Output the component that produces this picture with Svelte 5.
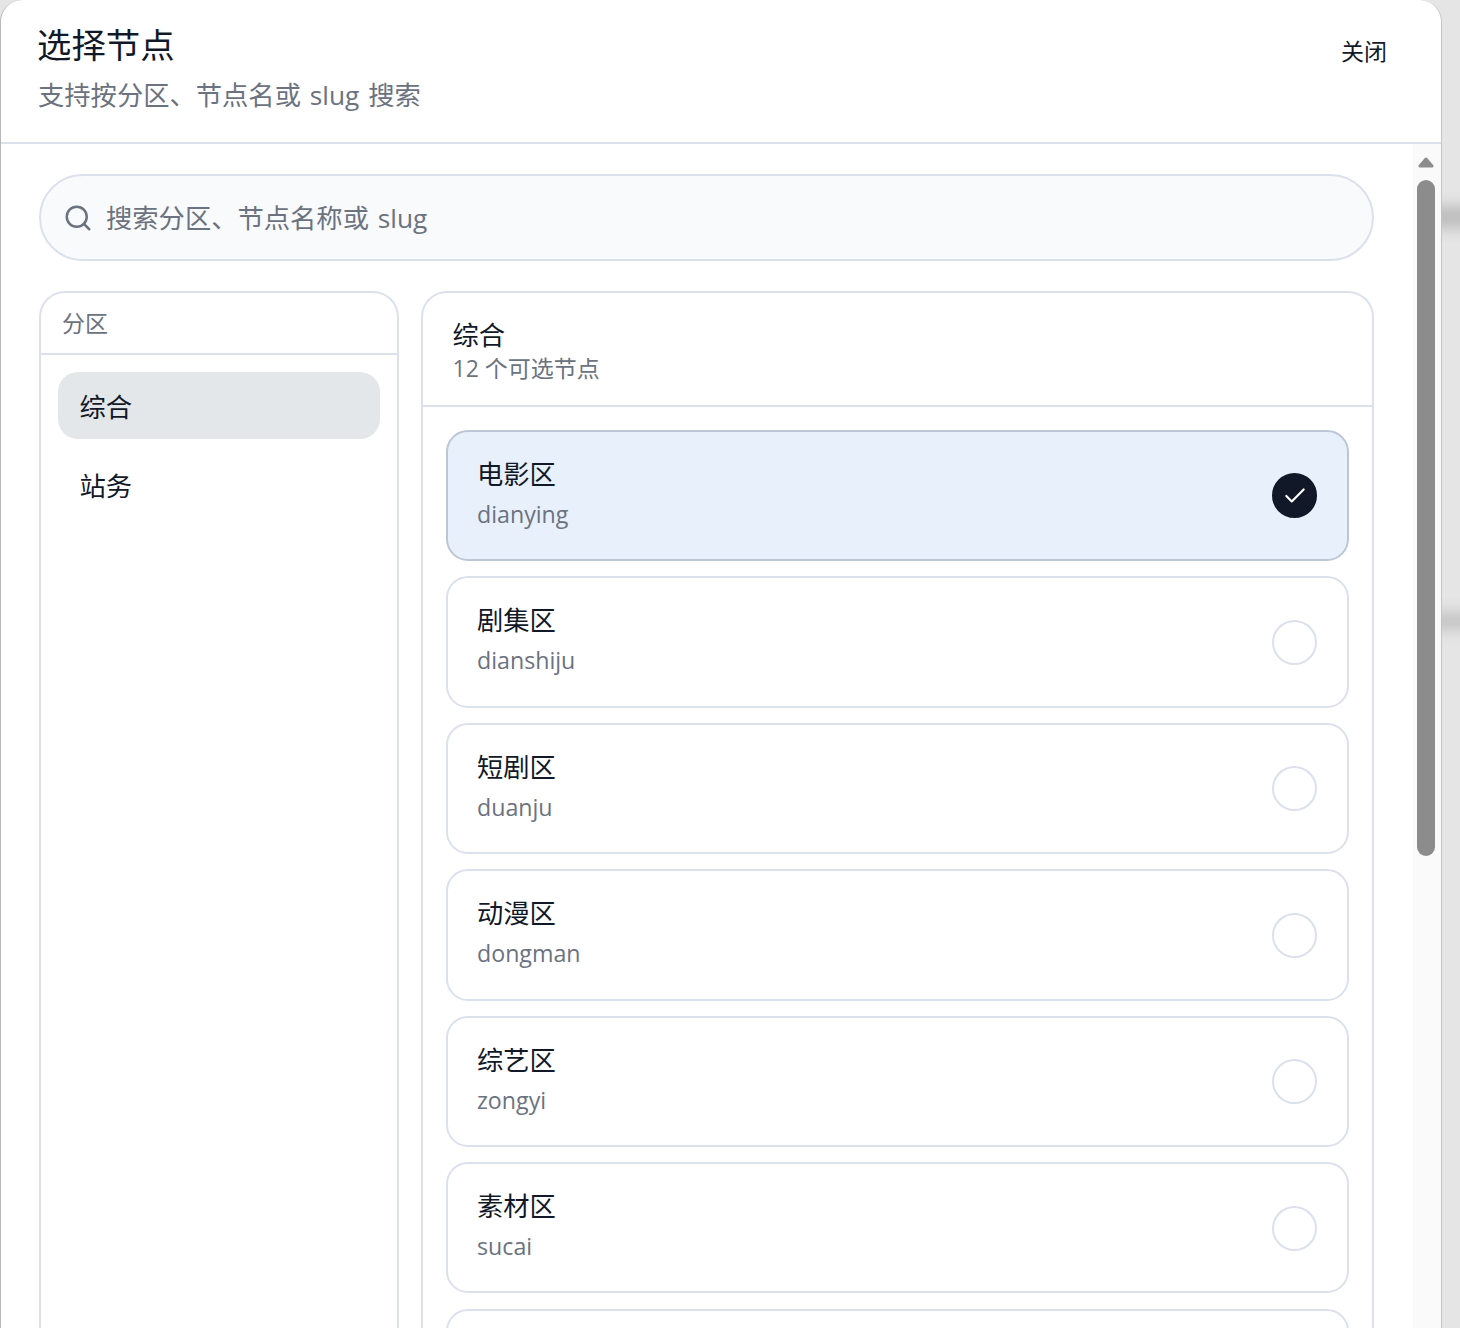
<script>
  const sections = [
    { name: '综合', active: true },
    { name: '站务', active: false }
  ];
  const nodes = [
    { name: '电影区', slug: 'dianying', selected: true },
    { name: '剧集区', slug: 'dianshiju' },
    { name: '短剧区', slug: 'duanju' },
    { name: '动漫区', slug: 'dongman' },
    { name: '综艺区', slug: 'zongyi' },
    { name: '素材区', slug: 'sucai' },
    { name: '', slug: '' }
  ];
</script>

<div class="page">
  <div class="dialog">
    <header class="head">
      <div class="head-text">
        <h2>选择节点</h2>
        <p>支持按分区、节点名或 slug 搜索</p>
      </div>
      <button class="close">关闭</button>
    </header>
    <div class="body">
      <div class="content">
        <div class="search">
          <svg class="search-icon" viewBox="0 0 24 24" fill="none" stroke="currentColor" stroke-width="2" stroke-linecap="round" stroke-linejoin="round">
            <circle cx="11" cy="11" r="8"></circle>
            <path d="m21 21-4.3-4.3"></path>
          </svg>
          <span>搜索分区、节点名称或 slug</span>
        </div>
        <div class="columns">
          <aside class="panel side">
            <div class="side-head">分区</div>
            <div class="side-list">
              {#each sections as s}
                <button class="side-item" class:active={s.active}>{s.name}</button>
              {/each}
            </div>
          </aside>
          <section class="panel main">
            <div class="main-head">
              <div class="main-title">综合</div>
              <div class="main-sub">12 个可选节点</div>
            </div>
            <div class="node-list">
              {#each nodes as n}
                <div class="node" class:selected={n.selected}>
                  {#if n.name}
                    <div class="node-text">
                      <div class="node-name">{n.name}</div>
                      <div class="node-slug">{n.slug}</div>
                    </div>
                    <div class="radio">
                      {#if n.selected}
                        <svg viewBox="0 0 24 24" fill="none" stroke="#fff" stroke-width="2" stroke-linecap="round" stroke-linejoin="round">
                          <path d="M20 6 9 17l-5-5"></path>
                        </svg>
                      {/if}
                    </div>
                  {/if}
                </div>
              {/each}
            </div>
          </section>
        </div>
      </div>
      <div class="scrollbar">
        <svg class="arrow" viewBox="0 0 16 11">
          <path d="M8 2 14 9H2Z" fill="#8c8c8c" stroke="#8c8c8c" stroke-width="3" stroke-linejoin="round"></path>
        </svg>
        <div class="thumb"></div>
      </div>
    </div>
  </div>
  <div class="backdrop">
    <div class="blob one"></div>
    <div class="blob two"></div>
  </div>
</div>

<style>
  :global(body) {
    margin: 0;
    background: #e5e5e5;
    font-family: "Open Sans", "Noto Sans CJK SC", sans-serif;
  }
  .page {
    display: flex;
    height: 1328px;
    overflow: hidden;
  }
  .dialog {
    width: 1442px;
    flex: none;
    box-sizing: border-box;
    background: #fff;
    border-left: 1px solid #b8b8b8;
    border-right: 1px solid #c4c4c4;
    border-radius: 22px 22px 0 0;
    display: flex;
    flex-direction: column;
    overflow: hidden;
  }
  .backdrop {
    flex: 1;
    background: #e5e5e5;
    position: relative;
    overflow: hidden;
  }
  .blob {
    position: absolute;
    left: -30px;
    right: -30px;
    height: 22px;
    background: #bcbcbc;
    filter: blur(7px);
  }
  .one { top: 206px; }
  .two { top: 612px; height: 18px; background: #c4c4c4; }
  .head {
    height: 144px;
    box-sizing: border-box;
    flex: none;
    border-bottom: 2px solid #dbe1ec;
    padding: 0 54px 0 37px;
    display: flex;
    justify-content: space-between;
    align-items: flex-start;
  }
  h2 {
    margin: 22px 0 0 -1px;
    font-size: 34.4px;
    line-height: 46px;
    font-weight: 400;
    color: #111827;
  }
  .head-text p {
    margin: 9px 0 0;
    font-size: 26.3px;
    line-height: 36px;
    word-spacing: 2px;
    color: #6b7280;
  }
  .close {
    margin: 34px 0 0;
    padding: 0;
    border: none;
    background: none;
    font: inherit;
    font-size: 23px;
    line-height: 34px;
    color: #111827;
  }
  .body {
    flex: 1;
    display: flex;
    min-height: 0;
  }
  .content {
    flex: 1;
    min-width: 0;
    padding: 30px 39px 0 38px;
    display: flex;
    flex-direction: column;
    gap: 30px;
  }
  .search {
    height: 87px;
    flex: none;
    box-sizing: border-box;
    border: 2px solid #dbe1ec;
    border-radius: 44px;
    background: #f9fafb;
    display: flex;
    align-items: center;
    gap: 13px;
    padding: 0 22px;
    font-size: 26.3px;
    line-height: 36px;
    word-spacing: 2px;
    color: #6b7280;
  }
  .search span {
    margin-top: 1px;
  }
  .search-icon {
    width: 30px;
    height: 30px;
    flex: none;
  }
  .columns {
    display: flex;
    gap: 22px;
    flex: 1;
    min-height: 0;
  }
  .panel {
    box-sizing: border-box;
    border: 2px solid #dbe1ec;
    border-bottom: none;
    border-radius: 26px 26px 0 0;
    background: #fff;
    overflow: hidden;
  }
  .side {
    width: 360px;
    flex: none;
  }
  .side-head {
    height: 62px;
    box-sizing: border-box;
    border-bottom: 2px solid #dbe1ec;
    padding-left: 21px;
    font-size: 23px;
    line-height: 60px;
    color: #6b7280;
  }
  .side-list {
    padding: 17px 17px;
    display: flex;
    flex-direction: column;
    gap: 12px;
  }
  .side-item {
    height: 67px;
    border: none;
    border-radius: 20px;
    background: none;
    padding: 0 22px 0 21.5px;
    text-align: left;
    font: inherit;
    font-size: 26.3px;
    color: #111827;
  }
  .side-item.active {
    background: #e4e7ea;
  }
  .main {
    flex: 1;
    min-width: 0;
  }
  .main-head {
    height: 114px;
    box-sizing: border-box;
    border-bottom: 2px solid #dbe1ec;
    padding: 24px 30px 0 29.5px;
  }
  .main-title {
    font-size: 26.3px;
    line-height: 36px;
    color: #111827;
  }
  .main-sub {
    margin-top: -1px;
    font-size: 23px;
    line-height: 32px;
    color: #6b7280;
  }
  .node-list {
    padding: 23px 23px 0;
    display: flex;
    flex-direction: column;
    gap: 15.15px;
  }
  .node {
    height: 131.3px;
    flex: none;
    box-sizing: border-box;
    border: 2px solid #dbe1ec;
    border-radius: 22px;
    display: flex;
    align-items: center;
    justify-content: space-between;
    padding: 0 30px 0 29px;
  }
  .node.selected {
    background: #e8f0fb;
    border-color: #bcc7d6;
  }
  .node-text {
    margin-top: -3.4px;
  }
  .node-name {
    font-size: 26.3px;
    line-height: 36px;
    color: #111827;
  }
  .node-slug {
    margin-top: 4px;
    font-size: 23.2px;
    line-height: 36px;
    color: #6b7280;
  }
  .radio {
    width: 45px;
    height: 45px;
    margin-top: 0.6px;
    box-sizing: border-box;
    border: 2px solid #dbe1ec;
    border-radius: 50%;
    display: flex;
    align-items: center;
    justify-content: center;
  }
  .selected .radio {
    background: #111827;
    border-color: #111827;
  }
  .radio svg {
    width: 26px;
    height: 26px;
  }
  .scrollbar {
    width: 28px;
    flex: none;
    background: #fafafa;
    display: flex;
    flex-direction: column;
    align-items: center;
    padding: 13px 2px 0 0;
    box-sizing: border-box;
  }
  .arrow {
    width: 16px;
    height: 11px;
    flex: none;
  }
  .thumb {
    margin-top: 12px;
    width: 18px;
    height: 676px;
    border-radius: 9px;
    background: #8c8c8c;
  }
</style>
